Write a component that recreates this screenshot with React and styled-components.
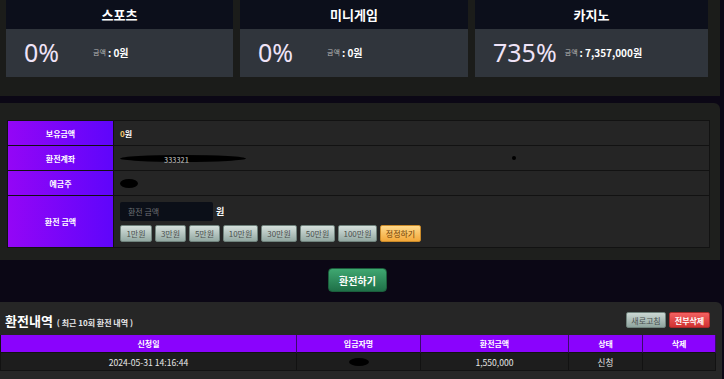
import React from "react";
import styled, { createGlobalStyle } from "styled-components";

const GlobalStyle = createGlobalStyle`
  html, body { margin: 0; padding: 0; }
  body {
    background: #0b0715;
    font-family: "Noto Sans CJK KR", "Noto Sans", sans-serif;
    color: #fff;
    overflow: hidden;
  }
  * { box-sizing: border-box; }
`;

const Page = styled.div`
  width: 724px;
  height: 379px;
  overflow: hidden;
`;

const TopSection = styled.section`
  width: 720px;
  background: #1b1c1a;
  padding: 0 11px 19px 6px;
  display: grid;
  grid-template-columns: 227px 228px 233px;
  column-gap: 7px;
`;

const Card = styled.div`
  display: flex;
  flex-direction: column;
`;

const CardTitle = styled.div`
  height: 29px;
  background: #0c0f1b;
  display: flex;
  align-items: center;
  justify-content: center;
  font-size: 13px;
  font-weight: 700;
  color: #fff;
`;

const CardStats = styled.div`
  height: 48px;
  background: #30353c;
  display: flex;
  align-items: center;
  padding-left: 18px;
  padding-bottom: 2px;
`;

const Percent = styled.span`
  font-family: "Noto Sans", sans-serif;
  font-size: 25px;
  line-height: 1;
  color: #efe3f7;
  min-width: 61px;
  margin-right: 8px;
`;

const AmountLabel = styled.span`
  font-size: 7px;
  color: #b8b8b8;
  margin-right: 2px;
`;

const AmountValue = styled.span`
  font-size: 10px;
  font-weight: 700;
  color: #fff;
`;

const FormPanel = styled.section`
  margin-top: 7px;
  width: 720px;
  background: #1e1f1d;
  padding: 17px 10px 12px 7px;
  border-top-right-radius: 6px;
`;

const FormTable = styled.div`
  display: grid;
  grid-template-columns: 105px 1fr;
  grid-template-rows: 25px 25px 25px 52px;
  border: 1px solid #121212;
  border-bottom: none;
`;

const Label = styled.div`
  background: linear-gradient(to right, #9406f6, #5f05fb);
  color: #fff;
  font-size: 8px;
  font-weight: 700;
  display: flex;
  align-items: center;
  justify-content: center;
  border-bottom: 1px solid #121212;
`;

const Value = styled.div`
  background: #252525;
  border-left: 1px solid #121212;
  border-bottom: 1px solid #121212;
  padding-left: 6px;
  display: flex;
  flex-direction: ${(p) => (p.$column ? "column" : "row")};
  align-items: ${(p) => (p.$column ? "flex-start" : "center")};
  justify-content: ${(p) => (p.$column ? "center" : "flex-start")};
  gap: ${(p) => (p.$column ? "4px" : "0")};
  font-size: 8px;
  font-weight: 700;
  color: #fff;
`;

const Gold = styled.span`
  color: #f3c66c;
`;

const Redact = styled.span`
  display: inline-block;
  background: #000;
  border-radius: 50%;
  width: ${(p) => p.$w}px;
  height: ${(p) => p.$h}px;
  margin-left: ${(p) => p.$ml || 0}px;
`;

const Faint = styled.span`
  font-size: 7px;
  color: #9a9a9a;
  margin-left: -82px;
  margin-top: 3px;
`;

const InputRow = styled.div`
  display: flex;
  align-items: center;
  gap: 3px;
`;

const AmountInput = styled.input`
  width: 93px;
  height: 19px;
  background: #0b0f18;
  border: none;
  border-radius: 2px;
  padding: 0 8px;
  font-family: inherit;
  font-size: 8px;
  color: #ddd;
  outline: none;
  &::placeholder { color: #6d6f75; }
`;

const Won = styled.span`
  font-size: 9px;
  font-weight: 700;
`;

const ChipRow = styled.div`
  display: flex;
  gap: 3px;
`;

const Chip = styled.button`
  height: 17px;
  width: ${(p) => p.$w}px;
  padding: 0;
  border-radius: 2px;
  font-family: inherit;
  font-size: 8px;
  cursor: pointer;
  border: 1px solid ${(p) => (p.$warn ? "#c98a2a" : "#6f827c")};
  background: ${(p) =>
    p.$warn
      ? "linear-gradient(#ffd98a, #f3a83a)"
      : "linear-gradient(#d5e0dc, #94a9a3)"};
  color: ${(p) => (p.$warn ? "#6d3c06" : "#4a4f4e")};
`;

const ActionBar = styled.div`
  width: 715px;
  display: flex;
  justify-content: center;
  padding: 8px 0 10px;
`;

const SubmitButton = styled.button`
  width: 59px;
  height: 24px;
  border: 1px solid #1b5d3b;
  border-radius: 4px;
  background: linear-gradient(#3fa771, #1f7048);
  color: #fff;
  font-family: inherit;
  font-size: 10px;
  font-weight: 700;
  cursor: pointer;
`;

const HistoryPanel = styled.section`
  width: 722px;
  background: #262626;
  border-radius: 0 6px 0 0;
  padding-top: 10px;
  min-height: 78px;
`;

const HistoryHeader = styled.div`
  display: flex;
  align-items: center;
  justify-content: space-between;
  height: 16px;
  padding: 0 12px 0 5px;
  margin-bottom: 7px;
`;

const Title = styled.h2`
  margin: 0;
  font-size: 13px;
  font-weight: 700;
  color: #fff;
  display: flex;
  align-items: baseline;
  gap: 4px;
`;

const SubTitle = styled.span`
  font-size: 8px;
  font-weight: 700;
  color: #e8e8e8;
`;

const HeaderButtons = styled.div`
  display: flex;
  gap: 3px;
`;

const SmallButton = styled.button`
  height: 16px;
  width: ${(p) => p.$w}px;
  padding: 0;
  border-radius: 2px;
  font-family: inherit;
  font-size: 8px;
  font-weight: ${(p) => (p.$danger ? 700 : 400)};
  cursor: pointer;
  border: 1px solid ${(p) => (p.$danger ? "#a82a2a" : "#6f827c")};
  background: ${(p) =>
    p.$danger
      ? "linear-gradient(#f36161, #d13232)"
      : "linear-gradient(#cbd7d3, #8fa49e)"};
  color: ${(p) => (p.$danger ? "#fff" : "#4a4f4e")};
`;

const HistoryTable = styled.div`
  width: 715px;
  display: grid;
  grid-template-columns: 296px 124px 148px 74px 73px;
  border-left: 1px solid #121212;
`;

const HeadCell = styled.div`
  height: 18px;
  background: #8a03fd;
  border-right: 1px solid #3a0a6a;
  border-bottom: 1px solid #121212;
  display: flex;
  align-items: center;
  justify-content: center;
  font-size: 8px;
  font-weight: 700;
  color: #fff;
`;

const Cell = styled.div`
  height: 18px;
  background: #1d1d1d;
  border-right: 1px solid #121212;
  border-bottom: 1px solid #121212;
  display: flex;
  align-items: center;
  justify-content: center;
  font-size: 8.6px;
  color: #e6e6e6;
`;

const cards = [
  { title: "스포츠", pct: "0%", amount: "0원" },
  { title: "미니게임", pct: "0%", amount: "0원" },
  { title: "카지노", pct: "735%", amount: "7,357,000원" },
];

const chips = [
  { label: "1만원", w: 32 },
  { label: "3만원", w: 31 },
  { label: "5만원", w: 31 },
  { label: "10만원", w: 35 },
  { label: "30만원", w: 36 },
  { label: "50만원", w: 35 },
  { label: "100만원", w: 39 },
];

export default function App() {
  return (
    <Page>
      <GlobalStyle />
      <TopSection>
        {cards.map((c) => (
          <Card key={c.title}>
            <CardTitle>{c.title}</CardTitle>
            <CardStats>
              <Percent>{c.pct}</Percent>
              <AmountLabel>금액</AmountLabel>
              <AmountValue>: {c.amount}</AmountValue>
            </CardStats>
          </Card>
        ))}
      </TopSection>

      <FormPanel>
        <FormTable>
          <Label>보유금액</Label>
          <Value>
            <Gold>0</Gold>원
          </Value>
          <Label>환전계좌</Label>
          <Value>
            <Redact $w={126} $h={7} />
            <Faint>333321</Faint>
            <Redact $w={4} $h={4} $ml={323} />
          </Value>
          <Label>예금주</Label>
          <Value>
            <Redact $w={18} $h={9} />
          </Value>
          <Label>환전 금액</Label>
          <Value $column>
            <InputRow>
              <AmountInput placeholder="환전 금액" />
              <Won>원</Won>
            </InputRow>
            <ChipRow>
              {chips.map((ch) => (
                <Chip key={ch.label} $w={ch.w}>
                  {ch.label}
                </Chip>
              ))}
              <Chip $warn $w={41}>
                정정하기
              </Chip>
            </ChipRow>
          </Value>
        </FormTable>
      </FormPanel>

      <ActionBar>
        <SubmitButton>환전하기</SubmitButton>
      </ActionBar>

      <HistoryPanel>
        <HistoryHeader>
          <Title>
            환전내역<SubTitle>( 최근 10회 환전 내역 )</SubTitle>
          </Title>
          <HeaderButtons>
            <SmallButton $w={40}>새로고침</SmallButton>
            <SmallButton $danger $w={41}>
              전부삭제
            </SmallButton>
          </HeaderButtons>
        </HistoryHeader>
        <HistoryTable>
          <HeadCell>신청일</HeadCell>
          <HeadCell>입금자명</HeadCell>
          <HeadCell>환전금액</HeadCell>
          <HeadCell>상태</HeadCell>
          <HeadCell>삭제</HeadCell>
          <Cell>2024-05-31 14:16:44</Cell>
          <Cell>
            <Redact $w={20} $h={8} />
          </Cell>
          <Cell>1,550,000</Cell>
          <Cell>신청</Cell>
          <Cell />
        </HistoryTable>
      </HistoryPanel>
    </Page>
  );
}
